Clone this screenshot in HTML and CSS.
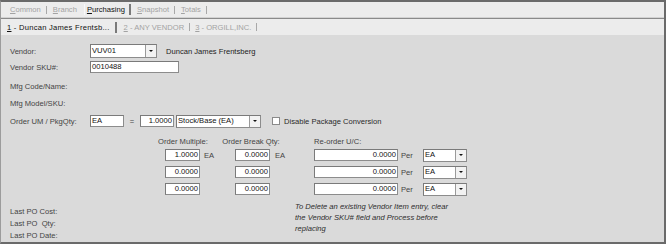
FILE: index.html
```html
<!DOCTYPE html>
<html>
<head>
<meta charset="utf-8">
<link rel="stylesheet" href="styles.css">
</head>
<body>
<div class="frame">
  <div class="tabs1">
    <span class="tab dis"><u>C</u>ommon</span><span class="sep"></span>
    <span class="tab dis"><u>B</u>ranch</span><span class="sep blank"></span>
    <span class="tab on"><u>P</u>urchasing</span><span class="sep dark"></span>
    <span class="tab dis"><u>S</u>napshot</span><span class="sep"></span>
    <span class="tab dis"><u>T</u>otals</span><span class="sep"></span>
  </div>
  <div class="tabs2">
    <span class="tab on first"><u>1</u> - Duncan James Frentsb...</span><span class="sep dark"></span>
    <span class="tab dis"><u>2</u> - ANY VENDOR</span><span class="sep"></span>
    <span class="tab dis"><u>3</u> - ORGILL,INC.</span><span class="sep"></span>
  </div>
  <div class="content">
    <div class="row r-vendor">
      <span class="lbl">Vendor:</span>
      <div class="combo w-vendor"><span class="val">VUV01</span><span class="btn"><i></i></span></div>
      <span class="name">Duncan James Frentsberg</span>
    </div>
    <div class="row r-sku">
      <span class="lbl">Vendor SKU#:</span>
      <div class="box w-sku"><span class="val">0010488</span></div>
    </div>
    <div class="row r-mfg1"><span class="lbl">Mfg Code/Name:</span></div>
    <div class="row r-mfg2"><span class="lbl">Mfg Model/SKU:</span></div>
    <div class="row r-um">
      <span class="lbl">Order UM / PkgQty:</span>
      <div class="box w-um"><span class="val">EA</span></div>
      <span class="eq">=</span>
      <div class="box w-um num"><span class="val">1.0000</span></div>
      <div class="combo w-stock"><span class="val">Stock/Base (EA)</span><span class="btn"><i></i></span></div>
      <span class="chk"></span>
      <span class="chk-lbl">Disable Package Conversion</span>
    </div>
    <div class="row r-head">
      <span class="h h1">Order Multiple:</span>
      <span class="h h2">Order Break Qty:</span>
      <span class="h h3">Re-order U/C:</span>
    </div>
    <div class="grid">
      <div class="box num"><span class="val">1.0000</span></div>
      <span class="unit">EA</span>
      <div class="box num"><span class="val">0.0000</span></div>
      <span class="unit u2">EA</span>
      <div class="box num"><span class="val">0.0000</span></div>
      <span class="unit u3">Per</span>
      <div class="combo"><span class="val">EA</span><span class="btn"><i></i></span></div>

      <div class="box num"><span class="val">0.0000</span></div>
      <span class="unit"></span>
      <div class="box num"><span class="val">0.0000</span></div>
      <span class="unit u2"></span>
      <div class="box num"><span class="val">0.0000</span></div>
      <span class="unit u3">Per</span>
      <div class="combo"><span class="val">EA</span><span class="btn"><i></i></span></div>

      <div class="box num"><span class="val">0.0000</span></div>
      <span class="unit"></span>
      <div class="box num"><span class="val">0.0000</span></div>
      <span class="unit u2"></span>
      <div class="box num"><span class="val">0.0000</span></div>
      <span class="unit u3">Per</span>
      <div class="combo"><span class="val">EA</span><span class="btn"><i></i></span></div>
    </div>
    <div class="bottom">
      <div class="last">
        <div>Last PO Cost:</div>
        <div>Last PO &nbsp;Qty:</div>
        <div>Last PO Date:</div>
      </div>
      <div class="note">To Delete an existing Vendor Item entry, clear the Vendor SKU# field and Process before replacing</div>
    </div>
  </div>
</div>
</body>
</html>
```

FILE: styles.css
```css
html, body {
  margin: 0;
  padding: 0;
  background: #ffffff;
}

.frame {
  width: 666px;
  height: 244px;
  box-sizing: border-box;
  border: 2px solid #6a6a6a;
  border-left: 1px solid #9c9c9c;
  background: #dadada;
  display: flex;
  flex-direction: column;
  font-family: "Liberation Sans", Arial, sans-serif;
  font-size: 7.6px;
  color: #444444;
  overflow: hidden;
}

.tabs1, .tabs2 {
  display: flex;
  align-items: center;
  background: #ececec;
  flex: none;
}

.tabs1 {
  height: 15px;
  border-bottom: 1px solid #d2d2d2;
  padding-left: 9px;
}

.tabs2 {
  height: 16px;
  border-top: 1px solid #8a8a8a;
  padding-left: 6px;
}

.tab {
  line-height: 10px;
  white-space: nowrap;
  padding-top: 1px;
}

.tab u {
  text-decoration: underline;
  text-underline-offset: 1px;
}

.tab.dis {
  color: #a3a3a3;
}

.tab.on {
  color: #111111;
}

.tab.first {
  letter-spacing: 0.25px;
}

.sep {
  width: 1px;
  height: 8px;
  background: #a8a8a8;
  margin: 0 6px 0 5px;
  flex: none;
}

.sep.blank {
  background: #f8f8f8;
  height: 11px;
  margin: 0 2px 0 7px;
}

.sep.dark {
  width: 2px;
  height: 11px;
  background: #7a7a7a;
  margin: 0 6px 0 4px;
}

.tabs2 .sep {
  margin: 0 5px 0 5px;
}

.tabs2 .sep.dark {
  margin: 0 7px 0 5px;
}

.content {
  flex: 1;
  padding: 9px 0 0 9px;
  display: flex;
  flex-direction: column;
}

.row {
  display: flex;
  align-items: center;
  flex: none;
}

.lbl {
  width: 80px;
  flex: none;
  white-space: nowrap;
}

.r-vendor { height: 14px; }
.r-sku { height: 12px; margin-top: 3px; }
.r-mfg1 { height: 12px; margin-top: 7px; }
.r-mfg2 { height: 12px; margin-top: 5px; }
.r-um { height: 12px; margin-top: 6px; }

.box, .combo {
  box-sizing: border-box;
  height: 12px;
  background: #ffffff;
  border: 1px solid #8c8c8c;
  border-top-color: #7a7a7a;
  border-left-color: #7a7a7a;
  display: flex;
  align-items: center;
  color: #111111;
  flex: none;
}

.combo {
  height: 13px;
}

.r-vendor .combo {
  height: 14px;
}

.val {
  flex: 1;
  padding: 0 1px;
  white-space: nowrap;
  overflow: hidden;
  line-height: 10px;
}

.num .val {
  text-align: right;
}

.btn {
  width: 10px;
  height: 100%;
  border-left: 1px solid #9a9a9a;
  background: #f2f2f2;
  display: flex;
  align-items: center;
  justify-content: center;
  flex: none;
}

.btn i {
  display: block;
  width: 0;
  height: 0;
  border-left: 2px solid transparent;
  border-right: 2px solid transparent;
  border-top: 2px solid #111111;
}

.w-vendor { width: 67px; }
.w-sku { width: 89px; }
.w-um { width: 34px; }
.w-stock { width: 85px; margin-left: 2px; }

.name {
  margin-left: 9px;
  color: #1c1c1c;
  white-space: nowrap;
}

.eq {
  width: 16px;
  text-align: center;
  flex: none;
}

.chk {
  width: 8px;
  height: 8px;
  box-sizing: border-box;
  background: #ffffff;
  border: 1px solid #8a8a8a;
  margin-left: 11px;
  flex: none;
}

.chk-lbl {
  margin-left: 4px;
  color: #2a2a2a;
  white-space: nowrap;
}

.r-head {
  height: 12px;
  margin-top: 8px;
}

.h {
  white-space: nowrap;
  flex: none;
}

.h1 {
  width: 60px;
  text-align: center;
  margin-left: 143px;
}

.h2 {
  width: 60px;
  text-align: center;
  margin-left: 8px;
}

.h3 {
  margin-left: 33px;
}

.grid {
  display: grid;
  grid-template-columns: 35px 35px 35px 44px 84px 25px 44px;
  grid-auto-rows: 12px;
  row-gap: 5px;
  margin-left: 155px;
  margin-top: 2px;
  align-items: center;
  flex: none;
}

.grid .combo {
  height: 13px;
}

.unit {
  padding-left: 4px;
  white-space: nowrap;
}

.unit.u2 {
  padding-left: 5px;
}

.unit.u3 {
  padding-left: 3px;
}

.bottom {
  display: flex;
  margin-top: 6px;
  flex: none;
}

.last {
  width: 285px;
  flex: none;
  line-height: 12px;
  padding-top: 5px;
}

.note {
  width: 158px;
  font-style: italic;
  color: #2e2e2e;
  line-height: 11px;
  padding-top: 0;
}
```
